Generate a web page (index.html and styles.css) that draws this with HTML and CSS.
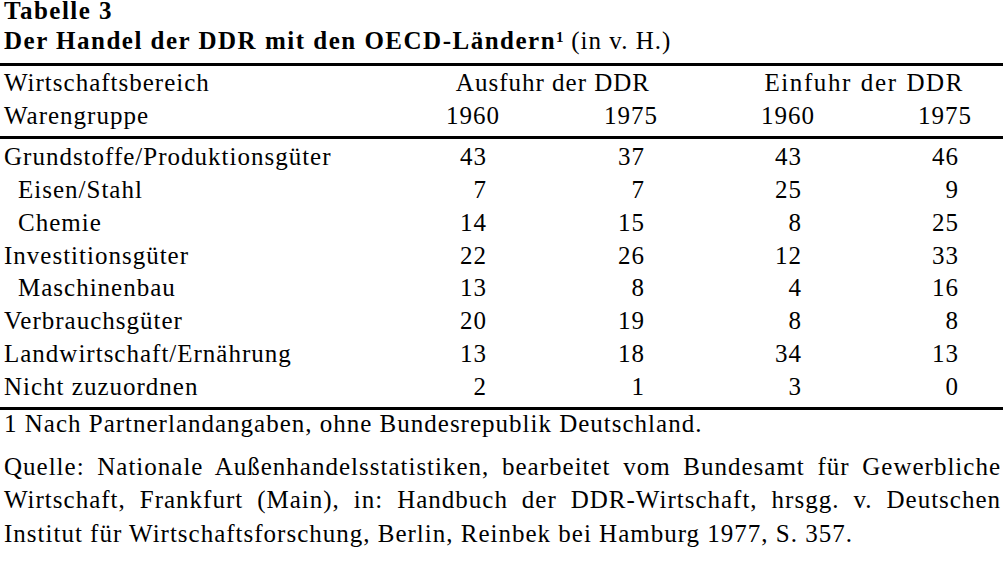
FILE: index.html
```html
<!DOCTYPE html>
<html lang="de">
<head>
<meta charset="utf-8">
<title>Tabelle 3</title>
<link rel="stylesheet" href="styles.css">
</head>
<body>
<div class="page">
  <h1 class="title">
    <span class="line first">Tabelle 3</span>
    <span class="line second">Der Handel der DDR mit den OECD-Ländern<sup class="fn">1</sup> <span class="unit">(in v. H.)</span></span>
  </h1>
  <div class="table">
    <div class="head">
      <div class="label">Wirtschaftsbereich</div>
      <div class="group">Ausfuhr der DDR</div>
      <div class="group wide">Einfuhr der DDR</div>
      <div class="spacer"></div>
      <div class="label">Warengruppe</div>
      <div class="year">1960</div>
      <div class="year">1975</div>
      <div class="year">1960</div>
      <div class="year">1975</div>
      <div class="spacer"></div>
    </div>
    <div class="body">
      <div class="label">Grundstoffe/Produktionsgüter</div><div class="num">43</div><div class="num">37</div><div class="num">43</div><div class="num">46</div><div class="spacer"></div>
      <div class="label sub">Eisen/Stahl</div><div class="num">7</div><div class="num">7</div><div class="num">25</div><div class="num">9</div><div class="spacer"></div>
      <div class="label sub">Chemie</div><div class="num">14</div><div class="num">15</div><div class="num">8</div><div class="num">25</div><div class="spacer"></div>
      <div class="label">Investitionsgüter</div><div class="num">22</div><div class="num">26</div><div class="num">12</div><div class="num">33</div><div class="spacer"></div>
      <div class="label sub">Maschinenbau</div><div class="num">13</div><div class="num">8</div><div class="num">4</div><div class="num">16</div><div class="spacer"></div>
      <div class="label">Verbrauchsgüter</div><div class="num">20</div><div class="num">19</div><div class="num">8</div><div class="num">8</div><div class="spacer"></div>
      <div class="label">Landwirtschaft/Ernährung</div><div class="num">13</div><div class="num">18</div><div class="num">34</div><div class="num">13</div><div class="spacer"></div>
      <div class="label">Nicht zuzuordnen</div><div class="num">2</div><div class="num">1</div><div class="num">3</div><div class="num">0</div><div class="spacer"></div>
    </div>
  </div>
  <p class="note">1 Nach Partnerlandangaben, ohne Bundesrepublik Deutschland.</p>
  <p class="source">
    <span class="jline">Quelle: Nationale Außenhandelsstatistiken, bearbeitet vom Bundesamt für Gewerbliche</span>
    <span class="jline">Wirtschaft, Frankfurt (Main), in: Handbuch der DDR-Wirtschaft, hrsgg. v. Deutschen</span>
    <span class="lastline">Institut für Wirtschaftsforschung, Berlin, Reinbek bei Hamburg 1977, S. 357.</span>
  </p>
</div>
</body>
</html>
```
FILE: styles.css
```css
html, body {
  margin: 0;
  padding: 0;
  background: #ffffff;
}

.page {
  width: 1003px;
  font-family: "Liberation Serif", "Times New Roman", serif;
  font-size: 25px;
  letter-spacing: 1px;
  color: #000000;
}

.title {
  margin: 0;
  padding-left: 4px;
  font-size: 25px;
  font-weight: bold;
  letter-spacing: 1.5px;
}

.title .line {
  display: block;
}

.title .first {
  line-height: 22px;
}

.title .second {
  line-height: 38px;
}

.fn {
  font-size: 15px;
  line-height: 0;
  vertical-align: 7.5px;
  letter-spacing: 0;
}

.unit {
  font-weight: normal;
  letter-spacing: 1px;
}

.table {
  margin-top: 3px;
  border-top: 3px solid #000;
  border-bottom: 3px solid #000;
}

.head,
.body {
  display: grid;
  grid-template-columns: 342px 158px 158px 157px 157px 1fr;
}

.head {
  line-height: 33.3px;
  padding-bottom: 3.4px;
  border-bottom: 3px solid #000;
}

.body {
  line-height: 32.9px;
  padding-top: 1.8px;
  padding-bottom: 3px;
}

.label {
  padding-left: 4px;
  white-space: nowrap;
}

.label.sub {
  padding-left: 18px;
}

.group {
  grid-column: span 2;
  text-align: right;
  padding-right: 8px;
  white-space: nowrap;
}

.group.wide {
  letter-spacing: 1.6px;
  word-spacing: 1px;
}

.year {
  text-align: right;
}

.num {
  text-align: right;
  padding-right: 13px;
}

.note {
  margin: 0;
  padding-left: 4px;
  line-height: 27px;
}

.source {
  margin: 13px 0 0 0;
  padding: 0 2px 0 4px;
  line-height: 33.3px;
}

.source .jline {
  display: block;
  text-align: justify;
  text-align-last: justify;
}

.source .lastline {
  display: block;
  text-align: left;
}
```
